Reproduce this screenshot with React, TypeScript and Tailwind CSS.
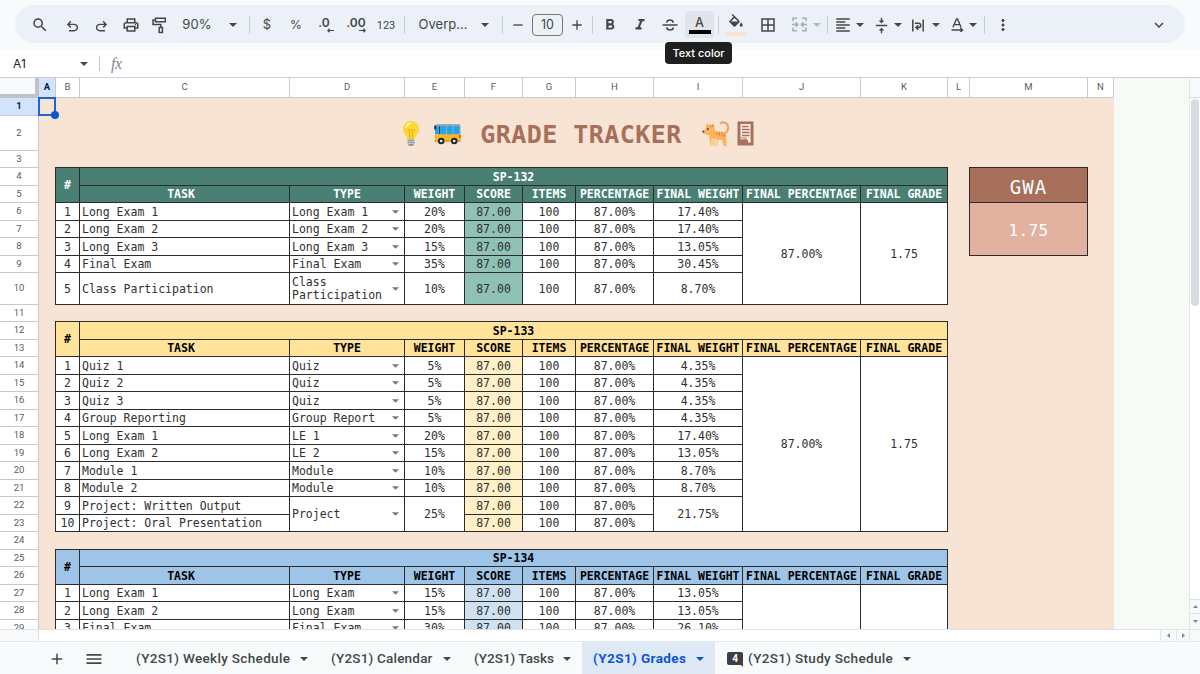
import type { CSSProperties, ReactNode } from "react";
import {
  MdAdd,
  MdBorderAll,
  MdFormatAlignLeft,
  MdFormatBold,
  MdFormatColorFill,
  MdFormatItalic,
  MdKeyboardArrowDown,
  MdMenu,
  MdMoreVert,
  MdOutlinePrint,
  MdRemove,
  MdSearch,
  MdVerticalAlignCenter,
} from "react-icons/md";

const COLUMNS = "ABCDEFGHIJKLMN".split("");
const ROWS = Array.from({ length: 29 }, (_, i) => i + 1);
const HEADINGS = [
  "TASK",
  "TYPE",
  "WEIGHT",
  "SCORE",
  "ITEMS",
  "PERCENTAGE",
  "FINAL WEIGHT",
  "FINAL PERCENTAGE",
  "FINAL GRADE",
];

type Task = {
  task: string;
  type?: string;
  weight?: string;
  final?: string;
  span?: number;
};

type Subject = {
  name: string;
  row: number;
  head: string;
  score: string;
  percentage?: string;
  grade?: string;
  tasks: Task[];
};

const SUBJECTS: Subject[] = [
  {
    name: "SP-132",
    row: 4,
    head: "bg-[#4a8073] text-white",
    score: "bg-[#8fc1b5]",
    percentage: "87.00%",
    grade: "1.75",
    tasks: [
      { task: "Long Exam 1", type: "Long Exam 1", weight: "20%", final: "17.40%" },
      { task: "Long Exam 2", type: "Long Exam 2", weight: "20%", final: "17.40%" },
      { task: "Long Exam 3", type: "Long Exam 3", weight: "15%", final: "13.05%" },
      { task: "Final Exam", type: "Final Exam", weight: "35%", final: "30.45%" },
      { task: "Class Participation", type: "Class Participation", weight: "10%", final: "8.70%" },
    ],
  },
  {
    name: "SP-133",
    row: 12,
    head: "bg-[#fee398] text-black",
    score: "bg-[#fff0c8]",
    percentage: "87.00%",
    grade: "1.75",
    tasks: [
      { task: "Quiz 1", type: "Quiz", weight: "5%", final: "4.35%" },
      { task: "Quiz 2", type: "Quiz", weight: "5%", final: "4.35%" },
      { task: "Quiz 3", type: "Quiz", weight: "5%", final: "4.35%" },
      { task: "Group Reporting", type: "Group Report", weight: "5%", final: "4.35%" },
      { task: "Long Exam 1", type: "LE 1", weight: "20%", final: "17.40%" },
      { task: "Long Exam 2", type: "LE 2", weight: "15%", final: "13.05%" },
      { task: "Module 1", type: "Module", weight: "10%", final: "8.70%" },
      { task: "Module 2", type: "Module", weight: "10%", final: "8.70%" },
      { task: "Project: Written Output", type: "Project", weight: "25%", final: "21.75%", span: 2 },
      { task: "Project: Oral Presentation" },
    ],
  },
  {
    name: "SP-134",
    row: 25,
    head: "bg-[#9ec4e7] text-black",
    score: "bg-[#cfe2f1]",
    tasks: [
      { task: "Long Exam 1", type: "Long Exam", weight: "15%", final: "13.05%" },
      { task: "Long Exam 2", type: "Long Exam", weight: "15%", final: "13.05%" },
      { task: "Final Exam", type: "Final Exam", weight: "30%", final: "26.10%" },
    ],
  },
];

// Grid line 1 is the header strip, so everything is shifted by one.
function place(col: number, row: number, cols = 1, rows = 1): CSSProperties {
  return {
    gridColumn: `${col + 1} / span ${cols}`,
    gridRow: `${row + 1} / span ${rows}`,
  };
}

function Caret({ className = "text-[#444746]" }: { className?: string }) {
  return (
    <svg className={`h-1 w-2 shrink-0 ${className}`} viewBox="0 0 8 4" fill="currentColor">
      <path d="M0 0h8L4 4z" />
    </svg>
  );
}

function Slot({ className, children }: { className: string; children?: ReactNode }) {
  return (
    <div className={`flex h-full shrink-0 items-center justify-center whitespace-nowrap ${className}`}>
      {children}
    </div>
  );
}

function Divider() {
  return <span className="h-[18px] w-px shrink-0 bg-[#c7cdd3]" />;
}

function UndoIcon({ className = "" }: { className?: string }) {
  return (
    <svg className={`size-[17px] shrink-0 ${className}`} viewBox="0 0 24 24" fill="currentColor">
      <path d="M7 19v-2h7.1q1.575 0 2.738-1T18 13.5 16.838 11 14.1 10H7.8l2.6 2.6L9 14 4 9l5-5 1.4 1.4L7.8 8h6.3q2.425 0 4.163 1.575T20 13.5t-1.737 3.925T14.1 19z" />
    </svg>
  );
}

function PaintIcon() {
  return (
    <svg className="h-[17px] w-[15px] shrink-0" viewBox="0 0 15 17" fill="none" stroke="currentColor" strokeWidth="1.5">
      <path d="M3.5 1.2h9.8v3.6H3.5zM3.5 3H1v4.6h7.8v3M7.2 10.6h3.2v5H7.2z" />
    </svg>
  );
}

function DecimalIcon({ digits, arrow }: { digits: string; arrow: "left" | "right" }) {
  return (
    <span className={`flex flex-col items-end leading-none ${arrow === "left" ? "pl-0.5" : ""}`}>
      <span className={`text-[12px] leading-[10px] font-semibold ${arrow === "left" ? "pr-1" : ""}`}>{digits}</span>
      <svg className="h-[5px] w-[7px]" viewBox="0 0 8 5" fill="none" stroke="currentColor" strokeWidth="1.4">
        <path d={arrow === "left" ? "M8 2.5H1M3 .5l-2 2 2 2" : "M0 2.5h7M5 .5l2 2-2 2"} />
      </svg>
    </span>
  );
}

function StrikeIcon() {
  return (
    <svg className="h-[14px] w-[16px] shrink-0" viewBox="0 0 16 14" fill="none" stroke="currentColor" strokeWidth="1.6">
      <path d="M.5 7h15M11.300 4.600C11 2.800 9.800 2 8 2S4.700 2.900 4.700 4.500M4.600 9.400C4.900 11.200 6.200 12 8 12s3.300-.9 3.300-2.500" />
    </svg>
  );
}

function MergeIcon() {
  return (
    <svg className="size-[15px] shrink-0 text-[#a9aeb3]" viewBox="0 0 15 15" fill="none" stroke="currentColor" strokeWidth="1.6">
      <path d="M5 1.3H1v3M10 1.3h4v3M5 13.7H1v-3M10 13.7h4v-3M0 7.5h5.4M3.6 5.4l2 2.1-2 2.1M15 7.5H9.6M11.4 5.4l-2 2.1 2 2.1" />
    </svg>
  );
}

function WrapIcon() {
  return (
    <svg className="h-[13px] w-[12px] shrink-0" viewBox="0 0 12 13" fill="none" stroke="currentColor" strokeWidth="1.5">
      <path d="M.8.5v12M11.2.5v12M2.8 4.2h3.7a2.2 2.2 0 0 1 0 4.4H4.4M6.2 6.4 4 8.6l2.2 2.2" />
    </svg>
  );
}

function RotateIcon() {
  return (
    <svg className="h-[14px] w-[13px] shrink-0" viewBox="0 0 13 14" fill="none" stroke="currentColor" strokeWidth="1.4">
      <path d="M2 9.2 5.5 1h1L10 9.2M3.3 6.6h5.4M.5 12h11M9.3 9.7l2.3 2.3-2.3 2.2" />
    </svg>
  );
}

function Toolbar() {
  return (
    <div className="flex h-[50px] shrink-0 bg-[#f7fbfc] pt-[5px] pr-[15px] pl-[15px]">
      <div className="flex h-[38px] w-full items-center rounded-full bg-[#ebf1f7] pt-px pl-[9px] text-[#444746]">
        <Slot className="w-8"><MdSearch className="size-[18px] shrink-0" /></Slot>
        <Slot className="w-8 pt-1"><UndoIcon /></Slot>
        <Slot className="w-[26px] pt-1"><UndoIcon className="-scale-x-100" /></Slot>
        <Slot className="w-[34px]"><MdOutlinePrint className="size-[18px] shrink-0" /></Slot>
        <Slot className="w-[22px] pt-px"><PaintIcon /></Slot>
        <Slot className="w-[54px] pt-px text-[13px] tracking-[0.1px]">90%</Slot>
        <Slot className="w-[18px]"><Caret /></Slot>
        <Slot className="w-3.5"><Divider /></Slot>
        <Slot className="w-[22px] text-[13px]">$</Slot>
        <Slot className="w-9 text-[12px]">%</Slot>
        <Slot className="w-[22px] pt-0.5"><DecimalIcon digits=".0" arrow="left" /></Slot>
        <Slot className="w-10 pt-0.5"><DecimalIcon digits=".00" arrow="right" /></Slot>
        <Slot className="w-5 pt-px font-['Roboto',sans-serif] text-[11px] leading-none">123</Slot>
        <Slot className="w-4"><Divider /></Slot>
        <Slot className="w-[62px] text-[13px]">Overp...</Slot>
        <Slot className="w-[22px]"><Caret /></Slot>
        <Slot className="w-3"><Divider /></Slot>
        <Slot className="w-5"><MdRemove className="size-4 shrink-0" /></Slot>
        <Slot className="w-[39px]">
          <span className="flex h-[22px] w-[31px] items-center justify-center rounded border border-[#747775] pt-px text-[12.5px]">10</span>
        </Slot>
        <Slot className="w-5"><MdAdd className="size-4 shrink-0" /></Slot>
        <Slot className="w-2.5"><Divider /></Slot>
        <Slot className="w-[26px] pt-px"><MdFormatBold className="size-[18px] shrink-0" /></Slot>
        <Slot className="w-[34px] pt-px"><MdFormatItalic className="size-[18px] shrink-0" /></Slot>
        <Slot className="w-[25px] pt-px"><StrikeIcon /></Slot>
        <Slot className="w-[35px]">
          <span className="flex h-[27px] w-[29px] flex-col items-center rounded bg-[#dfe5ea] pt-1 text-[12.5px] leading-[15px] font-medium">
            A
            <span className="h-1 w-[22px] bg-black" />
          </span>
        </Slot>
        <Slot className="w-0.5"><Divider /></Slot>
        <Slot className="w-[34px]">
          <span className="flex flex-col items-center">
            <svg className="h-[14px] w-[18px] overflow-hidden" viewBox="0 0 24 18.700"><MdFormatColorFill size={24} /></svg>
            <span className="mt-1 h-1 w-[22px] bg-[#f8e3d4]" />
          </span>
        </Slot>
        <Slot className="w-[30px] pt-px"><MdBorderAll className="size-[18px] shrink-0" /></Slot>
        <Slot className="w-8"><MergeIcon /></Slot>
        <Slot className="w-1"><Caret className="text-[#b4b9be]" /></Slot>
        <Slot className="w-4"><Divider /></Slot>
        <Slot className="w-4"><MdFormatAlignLeft className="size-[18px] shrink-0" /></Slot>
        <Slot className="w-[18px]"><Caret /></Slot>
        <Slot className="w-6 pt-px"><MdVerticalAlignCenter className="size-[17px] shrink-0" /></Slot>
        <Slot className="w-2.5"><Caret /></Slot>
        <Slot className="ml-[5px] w-5 pt-px"><WrapIcon /></Slot>
        <Slot className="w-4"><Caret /></Slot>
        <Slot className="ml-1 w-[18px]"><RotateIcon /></Slot>
        <Slot className="w-3.5"><Caret /></Slot>
        <Slot className="w-2"><Divider /></Slot>
        <Slot className="w-[30px] pt-px"><MdMoreVert className="size-[18px] shrink-0" /></Slot>
        <Slot className="mr-[17px] ml-auto w-[18px] pt-px"><MdKeyboardArrowDown className="size-[18px] shrink-0" /></Slot>
      </div>
    </div>
  );
}

function FormulaBar() {
  return (
    <div className="flex h-7 shrink-0 items-center border-b border-[#cdd1d4] pl-[13px] text-[#202124]">
      <span className="w-[67px] text-[12px]">A1</span>
      <Caret />
      <span className="ml-[11px] h-[15px] w-px bg-[#c7c7c7]" />
      <span className="ml-[11px] pt-px font-['Liberation_Serif',serif] text-[16px] tracking-[-0.5px] text-[#80868b] italic">fx</span>
    </div>
  );
}

type CellProps = {
  at: CSSProperties;
  className?: string;
  children?: ReactNode;
};

// Cells overlap their neighbours by one pixel so that borders collapse.
function Cell({ at, className = "justify-center", children }: CellProps) {
  return (
    <div
      className={`-mt-px -ml-px flex items-center overflow-hidden border border-[#2b2b2b] whitespace-nowrap ${className}`}
      style={at}
    >
      {children}
    </div>
  );
}

function SubjectTable({ subject }: { subject: Subject }) {
  const { name, row, head, score, percentage, grade, tasks } = subject;
  const first = row + 2;

  return (
    <>
      <Cell at={place(2, row, 1, 2)} className={`justify-center pt-0.5 font-bold ${head}`}>#</Cell>
      <Cell at={place(3, row, 9)} className={`justify-center pt-0.5 font-bold ${head}`}>{name}</Cell>
      {HEADINGS.map((heading, i) => (
        <Cell key={heading} at={place(3 + i, row + 1)} className={`justify-center pt-0.5 font-bold ${head} ${i === 0 ? "pr-[7px]" : ""}`}>
          {heading}
        </Cell>
      ))}

      {tasks.map((task, i) => {
        const r = first + i;
        return [
          <Cell key={`n${r}`} at={place(2, r)} className="justify-center bg-white pt-0.5">{i + 1}</Cell>,
          <Cell key={`t${r}`} at={place(3, r)} className="bg-white pt-0.5 pl-0.5">{task.task}</Cell>,
          task.type && (
            <Cell key={`y${r}`} at={place(4, r, 1, task.span)} className="justify-between bg-white pr-[5px] pl-0.5">
              <span className={task.type.length > 14 ? "w-24 pt-px leading-[13.5px] whitespace-normal" : "pt-0.5"}>{task.type}</span>
              <svg className="h-1 w-[7px] shrink-0 text-[#777]" viewBox="0 0 8 4" fill="currentColor">
                <path d="M0 0h8L4 4z" />
              </svg>
            </Cell>
          ),
          task.weight && (
            <Cell key={`w${r}`} at={place(5, r, 1, task.span)} className="justify-center bg-white pt-0.5">{task.weight}</Cell>
          ),
          <Cell key={`s${r}`} at={place(6, r)} className={`justify-center pt-0.5 ${score}`}>87.00</Cell>,
          <Cell key={`i${r}`} at={place(7, r)} className="justify-center bg-white pt-0.5">100</Cell>,
          <Cell key={`p${r}`} at={place(8, r)} className="justify-center bg-white pt-0.5">87.00%</Cell>,
          task.final && (
            <Cell key={`f${r}`} at={place(9, r, 1, task.span)} className="justify-center bg-white pt-0.5">{task.final}</Cell>
          ),
        ];
      })}

      <Cell at={place(10, first, 1, tasks.length)} className="justify-center bg-white pt-0.5">{percentage}</Cell>
      <Cell at={place(11, first, 1, tasks.length)} className="justify-center bg-white pt-0.5">{grade}</Cell>
    </>
  );
}

function Bulb() {
  return (
    <svg className="h-[27px] w-[18px]" viewBox="0 0 18 27">
      <path d="M9 1a8 8 0 0 0-8 8c0 4 3.4 6 4.4 10.500h7.200C13.600 15 17 13 17 9a8 8 0 0 0-8-8z" fill="#fcd835" />
      <path d="M4 5.500C5 3.500 7 2.400 9 2.400c1.500 0 1 1-1 1.800S5.500 7.500 4.300 8s-.9-1.400-.3-2.500z" fill="#fff59d" />
      <path d="M7.600 19V12l-2-2.500M10.400 19V12l2-2.500M5.600 10.500l1.800-1 1.600 1.200 1.600-1.200 1.800 1" fill="none" stroke="#f4a61d" strokeWidth="1" />
      <path d="M5.600 19.500h6.800v4l-1.500 2.600H7.100l-1.500-2.600z" fill="#8d9aa1" />
      <path d="M5.600 21.200h6.800M6 23.400h6" stroke="#cfd8dc" strokeWidth=".9" />
    </svg>
  );
}

function Bus() {
  return (
    <svg className="h-[22px] w-[27px]" viewBox="0 0 27 22">
      <path d="M2 1h23a1.500 1.500 0 0 1 1.500 1.500v15H1V5z" fill="#9fa8ad" />
      <path d="M.800 11.500 3 10.500h23.500v7.500H.800z" fill="#fbb52b" />
      <path d="M1 3h4v8H1zM6.200 3h5.600v8.200H6.200zM13 3h5.600v8.200H13zM19.800 3h5.700v8.200h-5.700z" fill="#1ea7ee" />
      <path d="M.2 2.500h2v4h-2z" fill="#263238" />
      <path d="M5.500 3v8.200" stroke="#37474f" />
      <path d="M25.200 12h1.400v3h-1.400z" fill="#e53935" />
      <path d="M.5 17.500h26v1.200H.5z" fill="#e08c17" />
      <circle cx="7.200" cy="18" r="3.300" fill="#202a2f" />
      <circle cx="7.200" cy="18" r="1.300" fill="#eceff1" />
      <circle cx="20.200" cy="18" r="3.300" fill="#202a2f" />
      <circle cx="20.200" cy="18" r="1.300" fill="#eceff1" />
    </svg>
  );
}

function Cat() {
  return (
    <svg className="h-[26px] w-[27px]" viewBox="0 0 27 26">
      <path d="M23 12.500c4-2.500 4.500-9.500-.5-11-1.800-.5-3.200 0-3.700.8" fill="none" stroke="#eaa35c" strokeWidth="2" strokeLinecap="round" />
      <path d="M4.500 2 7 4h2.500L12 2.200l.8 6.300c1 1.500 1.500 2 3.500 2 4.500 0 8.500.5 8 6.500-.2 2-.2 5 .5 8h-3l-1.800-6h-4.500v6h-2.500l-.7-5-.8 5H8.300c0-5-1.300-7-1-11-2.800.2-5.500-.8-6.300-2.200C1.500 9.500 4 8.500 4 6z" fill="#f9b45d" />
      <path d="M9.500 16c.8 2 3.500 2.500 5.500 1.500V25h-2.500l-.7-5-.8 5H8.800z" fill="#fbd49b" />
      <path d="M15 11v3M17.500 11v3.500M20 11.200V15M22.500 12.500 21.500 16M8.500 3.800v2.400M10.500 4v2" stroke="#d9803a" strokeWidth="1" />
      <circle cx="5.800" cy="8" r=".9" fill="#4e342e" />
      <circle cx="1.300" cy="10.600" r="1" fill="#4e342e" />
    </svg>
  );
}

function Page() {
  return (
    <svg className="h-[25px] w-[17px]" viewBox="0 0 17 25">
      <path d="M.5.500h16v24H.5z" fill="#a8705b" />
      <path d="M3.500 3h10v14.500l-1.500 1.500H3.500z" fill="#fbeee4" />
      <path d="M5 5.500h6.500M5 8.500h7.500M5 11.500h7.500M5 14.500h7.500" stroke="#a8705b" strokeWidth="1.300" />
      <path d="M3.500 16.500h6v6h-6z" fill="#a8705b" />
      <path d="M11 18h2.800v3.500H11z" fill="#fbeee4" />
      <path d="M3.500 17.800h5" stroke="#fbeee4" />
    </svg>
  );
}

function Sheet() {
  return (
    <div className="flex h-[551px] shrink-0 overflow-hidden bg-[#f6fbf6]">
      <div className="grid w-[1114px] shrink-0 grid-cols-[39px_17px_24px_210px_115px_60px_58px_53px_78px_89px_118px_87px_22px_118px_26px] grid-rows-[20px_18px_35px_17px_18px_17px_18px_17px_18px_17px_32px_17px_18px_17px_18px_17px_18px_17px_18px_17px_18px_17px_18px_17px_18px_17px_18px_17px_18px_17px] bg-[#f7e4d5] font-['DejaVu_Sans_Mono',monospace] text-[11.5px] text-[#303030]">
        <div className="border-r-4 border-b-4 border-[#c0c3c6] bg-[#f8f9fa]" style={place(0, 0)} />
        {COLUMNS.map((column, i) => (
          <div
            key={column}
            className={`flex items-center justify-center border-r border-b border-[#c9c9c9] font-['Roboto',sans-serif] text-[9.5px] ${
              i === 0 ? "bg-[#d3e3fd] font-bold text-[#041e49]" : "bg-white text-[#575b5f]"
            }`}
            style={place(i + 1, 0)}
          >
            {column}
          </div>
        ))}
        {ROWS.map((row) => (
          <div
            key={row}
            className={`flex items-center justify-center overflow-hidden border-r border-b border-[#c9c9c9] font-['Roboto',sans-serif] text-[9.5px] ${
              row === 1 ? "bg-[#d3e3fd] font-bold text-[#041e49]" : "bg-white text-[#575b5f]"
            }`}
            style={place(0, row)}
          >
            {row}
          </div>
        ))}

        <div className="relative -mt-px -ml-px border-2 border-[#1a67d2]" style={place(1, 1)}>
          <span className="absolute -right-[5px] -bottom-[5px] size-2 rounded-full bg-[#0b57d0]" />
        </div>

        <h1
          className="flex items-center justify-center pl-[3px] text-[25px] leading-none font-bold tracking-[0.45px] text-[#a8705b]"
          style={place(1, 2, 14)}
        >
          <Bulb />
          <span className="ml-3.5"><Bus /></span>
          <span className="ml-[19px] pt-px">GRADE TRACKER</span>
          <span className="ml-5"><Cat /></span>
          <span className="ml-2"><Page /></span>
        </h1>

        {SUBJECTS.map((subject) => (
          <SubjectTable key={subject.name} subject={subject} />
        ))}

        <Cell at={place(13, 4, 1, 2)} className="justify-center bg-[#a8705b] pt-1 text-[19px] tracking-[1px] text-white">GWA</Cell>
        <Cell at={place(13, 6, 1, 3)} className="justify-center bg-[#e3b1a0] pt-1 text-[16px] tracking-[0.4px] text-white">1.75</Cell>
      </div>

      <div className="ml-auto flex w-[11px] flex-col items-center border-l border-[#e3e6e6] bg-white">
        <div className="h-5 w-full shrink-0 border-b border-[#d9dcdc] bg-[#f8f9fa]" />
        <div className="mt-px h-[207px] w-2 shrink-0 rounded-full bg-[#d9dde1]" />
        <div className="mt-auto flex h-[15px] w-full items-center justify-center border-y border-[#dcdfe1] bg-[#f8f9fa]">
          <svg className="h-[3px] w-[5px]" viewBox="0 0 5 3" fill="#80868b"><path d="M0 3h5L2.500 0z" /></svg>
        </div>
        <div className="flex h-[15px] w-full items-center justify-center bg-[#f8f9fa]">
          <svg className="h-[3px] w-[5px]" viewBox="0 0 5 3" fill="#80868b"><path d="M0 0h5L2.500 3z" /></svg>
        </div>
      </div>
    </div>
  );
}

function HorizontalScroll() {
  return (
    <div className="flex h-3 shrink-0 border-t border-[#e0e3e3] bg-white">
      <div className="w-[39px] border-r border-[#dcdfe1] bg-[#f8f9fa]" />
      <div className="ml-auto flex w-4 items-center justify-center border-l border-[#e3e6e6] bg-[#f8f9fa]">
        <svg className="h-[5px] w-[3px]" viewBox="0 0 3 5" fill="#80868b"><path d="M3 0v5L0 2.500z" /></svg>
      </div>
      <div className="flex w-[14px] items-center justify-center border-x border-[#e3e6e6] bg-[#f8f9fa]">
        <svg className="h-[5px] w-[3px]" viewBox="0 0 3 5" fill="#80868b"><path d="M0 0v5l3-2.500z" /></svg>
      </div>
      <div className="w-[10px] bg-[#f8f9fa]" />
    </div>
  );
}

function SheetTabs() {
  return (
    <div className="flex h-[33px] shrink-0 items-stretch border-t border-[#e3e8ea] bg-[#f7fbfc] pt-px font-['Roboto',sans-serif] text-[13.5px] font-medium tracking-[0.33px] whitespace-nowrap text-[#444746]">
      <div className="flex w-[136px] items-center pl-12">
        <MdAdd className="size-[18px]" />
        <MdMenu className="ml-[18px] size-5" />
      </div>
      <div className="flex w-[195px] items-center">
        <span className="w-[164px]">(Y2S1) Weekly Schedule</span>
        <Caret />
      </div>
      <div className="flex w-[143px] items-center">
        <span className="w-28 tracking-[0.2px]">(Y2S1) Calendar</span>
        <Caret />
      </div>
      <div className="flex w-[108px] items-center">
        <span className="w-[89px] tracking-[0px]">(Y2S1) Tasks</span>
        <Caret />
      </div>
      <div className="-mt-px flex w-[133px] items-center bg-[#dfe8f5] pt-px pl-[11px] font-bold tracking-[0.4px] text-[#0b57d0]">
        <span className="w-[103px]">(Y2S1) Grades</span>
        <Caret className="text-[#0b57d0]" />
      </div>
      <div className="flex items-center pl-3">
        <span className="relative mr-[5px] flex h-[13px] w-4 items-center justify-center rounded-[2px] bg-[#3c4043] text-[10px] font-bold tracking-normal text-white">
          4
          <svg className="absolute right-0 -bottom-[2px] h-[4px] w-[4px]" viewBox="0 0 4 4" fill="#3c4043"><path d="M0 0h4v4z" /></svg>
        </span>
        <span className="w-[155px]">(Y2S1) Study Schedule</span>
        <Caret />
      </div>
    </div>
  );
}

export default function App() {
  return (
    <div className="relative flex h-[674px] w-[1200px] flex-col overflow-hidden bg-white font-['Inter',sans-serif]">
      <Toolbar />
      <FormulaBar />
      <Sheet />
      <HorizontalScroll />
      <SheetTabs />

      <div className="absolute top-[42px] left-[665px] flex h-[22px] w-[67px] items-center justify-center rounded bg-[#1f1f1f] text-[11px] font-medium whitespace-nowrap text-white">
        Text color
      </div>
    </div>
  );
}
